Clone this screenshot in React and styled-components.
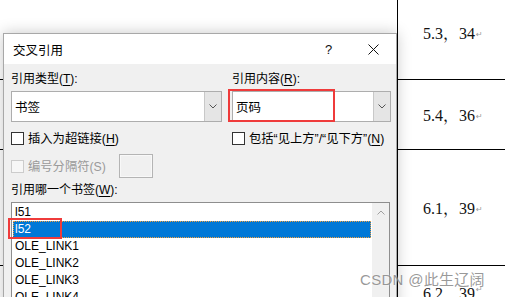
import React from 'react';
import styled, { createGlobalStyle } from 'styled-components';

const GlobalStyle = createGlobalStyle`
  html, body {
    margin: 0;
    padding: 0;
    background: #ffffff;
    overflow: hidden;
  }
  body {
    font-family: "Liberation Sans", "Noto Sans CJK SC", sans-serif;
  }
`;

const Page = styled.div`
  position: relative;
  width: 505px;
  height: 297px;
  overflow: hidden;
  background: #ffffff;
`;

const DocTable = styled.div`
  display: grid;
  grid-template-columns: 397px 1fr;
  grid-template-rows: 94px 70px 116px 60px;
  margin-top: -14px;
`;

const LeftCell = styled.div`
  border-bottom: 1px solid #000;
`;

const RightCell = styled.div`
  border-left: 1.5px solid #000;
  border-bottom: 1px solid #000;
  display: flex;
  align-items: ${p => (p.$top ? 'flex-start' : 'center')};
  padding-left: 25px;
  padding-top: ${p => (p.$top ? '15px' : '0')};
  font-family: "Liberation Serif", "Noto Serif CJK SC", "Noto Sans CJK SC", serif;
  font-size: 16px;
  color: #111;
`;

const ReturnMark = styled.span`
  font-family: "DejaVu Sans", sans-serif;
  font-size: 8px;
  color: #999;
  margin-left: 1px;
  margin-top: 4px;
`;

const Dialog = styled.div`
  position: absolute;
  left: 3px;
  top: 33px;
  width: 392px;
  height: 290px;
  border: 1px solid #a8a8a8;
  background: #f0f0f0;
  box-shadow: 0 0 14px rgba(0, 0, 0, 0.22);
  display: flex;
  flex-direction: column;
  color: #000;
  font-size: 12px;
`;

const TitleBar = styled.div`
  height: 30px;
  background: #ffffff;
  display: flex;
  align-items: center;
  padding-left: 9px;
  font-size: 12.5px;
`;

const Title = styled.span`
  flex: 1;
`;

const TitleButton = styled.div`
  width: 45px;
  height: 30px;
  display: flex;
  align-items: center;
  justify-content: center;
  font-size: 13px;
  color: #111;
`;

const Body = styled.div`
  padding: 6px 6px 0 7px;
  display: flex;
  flex-direction: column;
`;

const TwoCols = styled.div`
  display: grid;
  grid-template-columns: 211px 159px;
  column-gap: 10px;
  margin-top: ${p => p.$gap || 0}px;
`;

const Field = styled.div`
  display: flex;
  flex-direction: column;
`;

const Label = styled.div`
  height: 18px;
  line-height: 18px;
  margin: ${p => p.$top || 0}px 0 3px;
  color: #000;
  white-space: nowrap;
`;

const Key = styled.span`
  text-decoration: underline;
  text-underline-offset: 2px;
`;

const Combo = styled.div`
  position: relative;
  height: 29px;
  border: 1px solid #adadad;
  background: #ffffff;
  display: flex;
  align-items: stretch;
`;

const ComboText = styled.div`
  flex: 1;
  display: flex;
  align-items: center;
  padding-left: 3px;
  font-size: 12.5px;
`;

const ComboButton = styled.div`
  width: 16px;
  background: #e5e5e5;
  border-left: 1px solid #c8c8c8;
  display: flex;
  align-items: center;
  justify-content: center;
`;

const Highlight = styled.div`
  position: absolute;
  left: ${p => p.$left}px;
  top: ${p => p.$top}px;
  width: ${p => p.$w}px;
  height: ${p => p.$h}px;
  border: 2px solid #ef3b3b;
  box-sizing: border-box;
  pointer-events: none;
`;

const CheckRow = styled.label`
  display: flex;
  align-items: center;
  gap: 4px;
  height: 18px;
  white-space: nowrap;
  font-size: 12.3px;
  color: ${p => (p.$disabled ? '#9a9a9a' : '#000')};
`;

const Box = styled.span`
  width: 11px;
  height: 11px;
  border: 1px solid ${p => (p.$disabled ? '#cccccc' : '#333333')};
  background: ${p => (p.$disabled ? '#f7f7f7' : '#ffffff')};
  flex: none;
`;

const SepRow = styled.div`
  display: flex;
  align-items: center;
  gap: 13px;
  margin-top: 7px;
`;

const SepInput = styled.div`
  width: 32px;
  height: 22px;
  border: 1px solid #b4b4b4;
  box-shadow: inset 0 0 0 1px #f8f8f8;
  background: #f0f0f0;
`;

const ListBox = styled.div`
  position: relative;
  height: 120px;
  border: 1px solid #8e8e8e;
  background: #ffffff;
  display: flex;
`;

const Items = styled.div`
  flex: 1;
  padding: 1px 1px 0 1px;
`;

const Item = styled.div`
  height: 17px;
  line-height: 17px;
  padding-left: 2px;
  font-size: 12px;
  background: ${p => (p.$selected ? '#0078d7' : 'transparent')};
  color: ${p => (p.$selected ? '#ffffff' : '#000')};
  outline: ${p => (p.$selected ? '1px dotted #f0a040' : 'none')};
  outline-offset: -1px;
`;

const ScrollTrack = styled.div`
  width: 17px;
  background: #f0f0f0;
  display: flex;
  justify-content: center;
  padding-top: 7px;
`;

const Watermark = styled.div`
  position: absolute;
  left: 360px;
  top: 268px;
  font-family: "Liberation Sans", "Noto Sans CJK SC", sans-serif;
  font-size: 15px;
  color: rgba(120, 120, 120, 0.75);
  letter-spacing: 0.3px;
  text-shadow: 0 0 2px rgba(255, 255, 255, 0.8);
  white-space: nowrap;
`;

const Chevron = ({ up }) => (
  <svg width="8" height="5" viewBox="0 0 8 5">
    <polyline
      points={up ? '0.5,4.5 4,1 7.5,4.5' : '0.5,0.5 4,4 7.5,0.5'}
      fill="none"
      stroke={up ? '#a0a0a0' : '#555'}
      strokeWidth="1"
    />
  </svg>
);

const CloseIcon = () => (
  <svg width="11" height="11" viewBox="0 0 11 11">
    <path d="M0.5 0.5 L10.5 10.5 M10.5 0.5 L0.5 10.5" stroke="#111" strokeWidth="1" />
  </svg>
);

const cells = [
  { text: '5.3，34' },
  { text: '5.4，36' },
  { text: '6.1，39' },
  { text: '6.2，39', top: true },
];

const bookmarks = ['l51', 'l52', 'OLE_LINK1', 'OLE_LINK2', 'OLE_LINK3', 'OLE_LINK4'];

export default function App() {
  return (
    <>
      <GlobalStyle />
      <Page>
        <DocTable>
          {cells.map((c, i) => (
            <React.Fragment key={i}>
              <LeftCell />
              <RightCell $top={c.top}>
                {c.text}
                <ReturnMark>↵</ReturnMark>
              </RightCell>
            </React.Fragment>
          ))}
        </DocTable>

        <Dialog>
          <TitleBar>
            <Title>交叉引用</Title>
            <TitleButton>?</TitleButton>
            <TitleButton>
              <CloseIcon />
            </TitleButton>
          </TitleBar>
          <Body>
            <TwoCols>
              <Field>
                <Label>
                  引用类型(<Key>T</Key>):
                </Label>
                <Combo>
                  <ComboText>书签</ComboText>
                  <ComboButton>
                    <Chevron />
                  </ComboButton>
                </Combo>
              </Field>
              <Field>
                <Label>
                  引用内容(<Key>R</Key>):
                </Label>
                <Combo>
                  <ComboText>页码</ComboText>
                  <ComboButton>
                    <Chevron />
                  </ComboButton>
                  <Highlight $left={-5} $top={-3} $w={107} $h={33} />
                </Combo>
              </Field>
            </TwoCols>

            <TwoCols $gap={7}>
              <CheckRow>
                <Box />
                <span>
                  插入为超链接(<Key>H</Key>)
                </span>
              </CheckRow>
              <CheckRow>
                <Box />
                <span>
                  包括“见上方”/“见下方”(<Key>N</Key>)
                </span>
              </CheckRow>
            </TwoCols>

            <SepRow>
              <CheckRow $disabled>
                <Box $disabled />
                <span>编号分隔符(S)</span>
              </CheckRow>
              <SepInput />
            </SepRow>

            <Label $top={3}>
              引用哪一个书签(<Key>W</Key>):
            </Label>
            <ListBox>
              <Items>
                {bookmarks.map(b => (
                  <Item key={b} $selected={b === 'l52'}>
                    {b}
                  </Item>
                ))}
              </Items>
              <ScrollTrack>
                <Chevron up />
              </ScrollTrack>
              <Highlight $left={-4} $top={15} $w={54} $h={21} />
            </ListBox>
          </Body>
        </Dialog>

        <Watermark>CSDN @此生辽阔</Watermark>
      </Page>
    </>
  );
}
